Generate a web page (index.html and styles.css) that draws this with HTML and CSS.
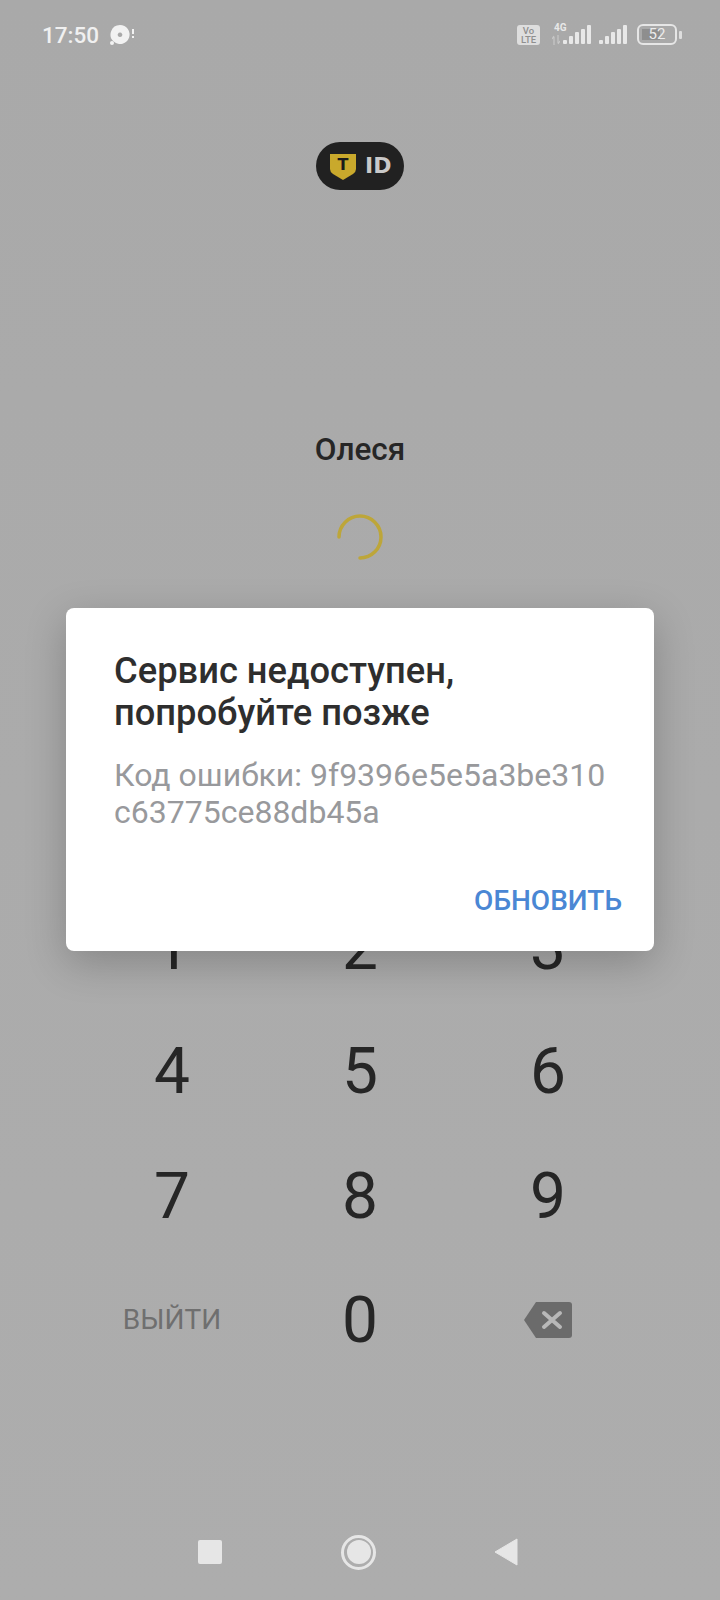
FILE: index.html
```html
<!DOCTYPE html>
<html lang="ru">
<head>
<meta charset="utf-8">
<title>T ID</title>
<link rel="stylesheet" href="styles.css">
</head>
<body>
<div class="screen">
  <header class="status">
    <div class="status-left">
      <span class="time">17:50</span>
      <svg class="disc" width="30" height="26" viewBox="0 0 30 26">
        <path class="white-fill" fill-rule="evenodd" d="M10 2a9.500 9.500 0 1 1 -6 16.800a9.500 9.500 0 0 1 6 -16.800zM10 9.500a2.300 2.300 0 1 0 .01 0z"/>
        <circle class="white-fill" cx="2" cy="20" r="2"/>
        <rect class="white-fill" x="22" y="6" width="2" height="5"/>
        <rect class="white-fill" x="22" y="13" width="2" height="2"/>
      </svg>
    </div>
    <div class="status-right">
      <span class="volte">Vo<br>LTE</span>
      <span class="net">
        <span class="net-label">4G</span>
        <svg class="arrows" width="8" height="10" viewBox="0 0 8 10">
          <path d="M2 10V2M0 4l2-3M6 0v8M8 6l-2 3" fill="none" stroke="#c8c8c8" stroke-width="1.200"/>
        </svg>
      </span>
      <svg class="signal" width="28" height="20" viewBox="0 0 28 20">
        <rect x="0" y="15" width="4" height="4" rx="1"/><rect x="6" y="11" width="4" height="8" rx="1"/><rect x="12" y="7" width="4" height="12" rx="1"/><rect x="18" y="4" width="4" height="15" rx="1"/><rect x="24" y="0" width="4" height="19" rx="1"/>
      </svg>
      <svg class="signal second" width="28" height="20" viewBox="0 0 28 20">
        <rect x="0" y="15" width="4" height="4" rx="1"/><rect x="6" y="11" width="4" height="8" rx="1"/><rect x="12" y="7" width="4" height="12" rx="1"/><rect x="18" y="4" width="4" height="15" rx="1"/><rect x="24" y="0" width="4" height="19" rx="1"/>
      </svg>
      <span class="battery">
        <span class="battery-body"><span class="battery-fill"></span><span class="battery-num">52</span></span>
        <span class="battery-cap"></span>
      </span>
    </div>
  </header>

  <div class="logo">
    <span class="shield">
      <svg width="26" height="26" viewBox="0 0 26 26"><path d="M0 0H26V15Q26 18 23 20L13 26L3 20Q0 18 0 15Z" fill="#c9a92c"/></svg>
      <span class="shield-t">T</span>
    </span>
    <span class="logo-id">ID</span>
  </div>

  <div class="name">Олеся</div>

  <svg class="spinner" width="46" height="46" viewBox="0 0 46 46">
    <path d="M2 23A21 21 0 1 1 23 44" fill="none" stroke="#bda63a" stroke-width="3.500" stroke-linecap="round"/>
  </svg>

  <div class="keypad">
    <div class="key">1</div><div class="key">2</div><div class="key">3</div>
    <div class="key">4</div><div class="key">5</div><div class="key">6</div>
    <div class="key">7</div><div class="key">8</div><div class="key">9</div>
    <div class="key key-text">ВЫЙТИ</div>
    <div class="key">0</div>
    <div class="key key-icon">
      <svg width="48" height="36" viewBox="0 0 48 36">
        <path d="M12 0H45Q48 0 48 3V33Q48 36 45 36H12L0 18Z" fill="#6b6b6b"/>
        <path d="M20 11L36 25M36 11L20 25" stroke="#b8b8b8" stroke-width="4" stroke-linecap="round"/>
      </svg>
    </div>
  </div>

  <nav class="navbar">
    <span class="nav-square"></span>
    <span class="nav-home"><span class="nav-home-dot"></span></span>
    <svg class="nav-back" width="24" height="28" viewBox="0 0 24 28"><path d="M23 1V27L1 14Z" fill="#e6e6e6" stroke="#e6e6e6" stroke-linejoin="round"/></svg>
  </nav>

  <section class="dialog">
    <h1 class="dialog-title">Сервис недоступен,<br>попробуйте позже</h1>
    <p class="dialog-text">Код ошибки: 9f9396e5e5a3be310<br>c63775ce88db45a</p>
    <div class="dialog-actions"><span class="dialog-btn">ОБНОВИТЬ</span></div>
  </section>
</div>
</body>
</html>
```
FILE: styles.css
```css
* { box-sizing: border-box; }
html, body { margin: 0; padding: 0; }
body { font-family: Roboto, "Noto Sans", sans-serif; background: #ababab; }
.screen {
  position: relative;
  width: 720px;
  height: 1600px;
  overflow: hidden;
  display: flex;
  flex-direction: column;
  align-items: center;
  background: linear-gradient(#a9a9a9, #adadad);
}
.status {
  width: 100%;
  height: 68px;
  padding: 23px 38px 0 42px;
  display: flex;
  justify-content: space-between;
  align-items: flex-start;
  color: #f0f0f0;
}
.status-left { display: flex; align-items: center; gap: 11px; }
.time { font-size: 22.500px; font-weight: 500; line-height: 22px; margin-bottom: 2px; }
.white-fill { fill: #f2f2f2; }
.disc { margin-top: 0; }
.status-right { display: flex; align-items: flex-start; margin-top: 1px; }
.volte {
  width: 23px;
  height: 20px;
  margin-top: 1px;
  border-radius: 3px;
  background: #dedede;
  color: #8f8f8f;
  font-size: 9.500px;
  font-weight: 500;
  line-height: 9px;
  text-align: center;
  padding-top: 1px;
}
.net { width: 14px; margin-left: 12px; position: relative; height: 20px; }
.net-label { position: absolute; left: 2px; top: -1px; font-size: 10px; font-weight: 700; line-height: 10px; color: #e8e8e8; }
.arrows { position: absolute; left: 0; top: 11px; }
.signal { margin-left: -3px; margin-top: 1px; fill: #e8e8e8; }
.signal.second { margin-left: 8px; }
.battery { display: flex; align-items: center; margin-left: 10px; margin-top: 0; }
.battery-body {
  position: relative;
  width: 40px;
  height: 21px;
  border: 2px solid #e6e6e6;
  border-radius: 6px;
  display: flex;
  align-items: center;
  justify-content: center;
}
.battery-fill { position: absolute; left: 3px; top: 3px; bottom: 3px; width: 18px; background: #8e8e8e; }
.battery-num { position: relative; font-size: 15px; line-height: 17px; color: #ececec; }
.battery-cap { width: 3px; height: 8px; margin-left: 2px; background: #dedede; border-radius: 1px; }

.logo {
  margin-top: 74px;
  width: 88px;
  height: 48px;
  border-radius: 24px;
  background: #212121;
  display: flex;
  align-items: center;
  padding-left: 14px;
  gap: 9px;
}
.shield { position: relative; width: 26px; height: 26px; display: block; margin-top: 1px; }
.shield svg { display: block; }
.shield-t {
  position: absolute;
  left: 0; right: 0; top: 2px;
  text-align: center;
  font-family: "DejaVu Sans", sans-serif;
  font-size: 16px;
  font-weight: 700;
  line-height: 18px;
  color: #1a1a1a;
}
.logo-id {
  font-family: "DejaVu Sans", sans-serif;
  font-size: 22px;
  font-weight: 700;
  line-height: 24px;
  color: #c9c9c9;
}
.name {
  margin-top: 240px;
  height: 40px;
  font-size: 31.500px;
  font-weight: 500;
  line-height: 40px;
  color: #262626;
}
.spinner { margin-top: 44px; display: block; }
.keypad {
  margin-top: 325px;
  width: 564px;
  display: grid;
  grid-template-columns: repeat(3, 188px);
  grid-auto-rows: 124.500px;
}
.key {
  display: flex;
  align-items: center;
  justify-content: center;
  font-size: 64px;
  font-weight: 400;
  color: #262626;
}
.key-text { font-size: 28px; font-weight: 400; color: #6f6f6f; padding-bottom: 2px; }
.key-icon { padding-bottom: 2px; }
.navbar {
  margin-top: 149px;
  margin-right: 4px;
  width: 320px;
  height: 40px;
  display: flex;
  align-items: center;
  justify-content: space-between;
}
.nav-square { width: 24px; height: 24px; border-radius: 2px; background: #e6e6e6; }
.nav-home {
  width: 35px;
  height: 35px;
  margin-left: 1px;
  border: 3px solid #e6e6e6;
  border-radius: 50%;
  display: flex;
  align-items: center;
  justify-content: center;
}
.nav-home-dot { width: 24px; height: 24px; border-radius: 50%; background: #e6e6e6; }
.nav-back { display: block; }

.dialog {
  position: absolute;
  left: 66px;
  top: 608px;
  width: 588px;
  height: 343px;
  padding: 42px 32px 0 48px;
  background: #fff;
  border-radius: 8px;
  box-shadow: 0 12px 40px rgba(0, 0, 0, .22);
  display: flex;
  flex-direction: column;
}
.dialog-title {
  margin: 0;
  font-size: 36.300px;
  font-weight: 500;
  line-height: 42px;
  color: #2e2e2e;
}
.dialog-text {
  margin: 23px 0 0;
  font-size: 32px;
  font-weight: 400;
  line-height: 37px;
  color: #98999c;
}
.dialog-actions { margin-top: 53px; display: flex; justify-content: flex-end; }
.dialog-btn { font-size: 28px; font-weight: 500; line-height: 34px; color: #4a87d4; }
```
